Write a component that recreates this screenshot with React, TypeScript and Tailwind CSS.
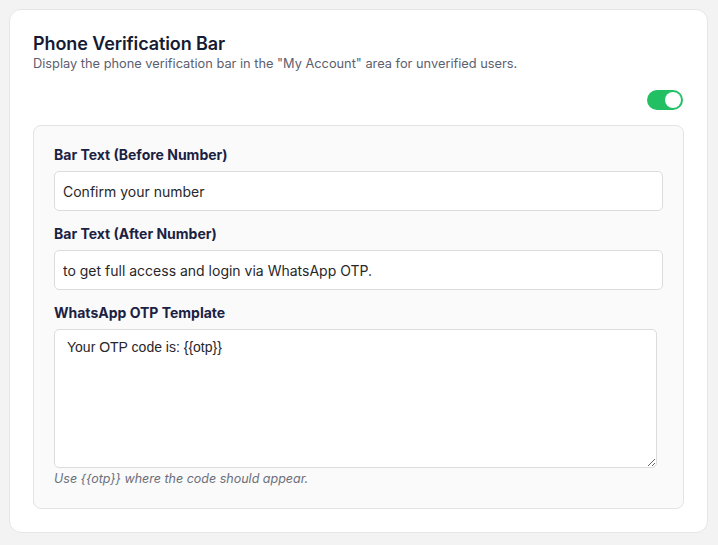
import { useState } from "react";

// ─── Phone Verification Settings ────────────────────────────────────────────

export default function App() {
  const [enabled, setEnabled] = useState(true);

  return (
    <div className="min-h-screen bg-[#f3f3f3] p-[9px] font-['Inter',sans-serif]">
      <section className="w-[699px] rounded-xl border border-[#e6e6e6] bg-white px-[23px] pt-[23px] pb-[23px]">
        {/* Header */}
        <h2 className="text-[18px] font-semibold leading-[22px] tracking-[-0.1px] text-[#161b33]">
          Phone Verification Bar
        </h2>
        <p className="text-[12.8px] leading-[18px] text-[#5b6070]">
          Display the phone verification bar in the "My Account" area for unverified users.
        </p>

        {/* Toggle */}
        <div className="mt-[17px] flex justify-end pr-[1px]">
          <button
            onClick={() => setEnabled(!enabled)}
            className={`flex h-[20px] w-[36px] items-center rounded-full px-[2px] ${
              enabled ? "justify-end bg-[#22c063]" : "justify-start bg-[#d1d5db]"
            }`}
          >
            <span className="h-[16px] w-[16px] rounded-full bg-white" />
          </button>
        </div>

        {/* Fields */}
        <div className="mt-[15px] rounded-lg border border-[#e3e3e3] bg-[#fafafa] px-[20px] pt-[19px] pb-[20px]">
          <Field label="Bar Text (Before Number)" value="Confirm your number" />
          <Field label="Bar Text (After Number)" value="to get full access and login via WhatsApp OTP." />

          <label className="block text-[14px] font-bold leading-[20px] text-[#1b2143]">
            WhatsApp OTP Template
          </label>
          <textarea
            defaultValue="Your OTP code is: {{otp}}"
            className="mt-[6px] block h-[139px] w-[calc(100%-6px)] rounded-[5px] border border-[#dcdcdc] bg-white px-[12px] py-[7px] font-['Liberation_Sans',Arial,sans-serif] text-[14px] leading-[20px] text-[#27272a] focus:outline-none"
          />
          <p className="mt-[2px] text-[12.5px] italic leading-[18px] text-[#6b6f7a]">
            Use {"{{otp}}"} where the code should appear.
          </p>
        </div>
      </section>
    </div>
  );
}

function Field({ label, value }: { label: string; value: string }) {
  return (
    <div className="mb-[13px]">
      <label className="block text-[14px] font-bold leading-[20px] text-[#1b2143]">{label}</label>
      <input
        type="text"
        defaultValue={value}
        className="mt-[6px] block h-[40px] w-full rounded-[5px] border border-[#dcdcdc] bg-white px-[8px] text-[14px] text-[#27272a] focus:outline-none"
      />
    </div>
  );
}
